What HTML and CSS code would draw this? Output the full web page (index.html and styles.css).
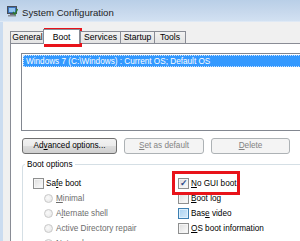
FILE: index.html
```html
<!DOCTYPE html>
<html lang="en">
<head>
    <meta charset="UTF-8">
    <title>System Configuration</title>
    <link rel="stylesheet" href="styles.css">
</head>
<body>
    <div class="window">
        <div class="titlebar">
            <svg class="app-icon" width="11" height="11" viewBox="0 0 11 11">
                <rect x="0.5" y="0.5" width="9" height="7" fill="#3b6fb6" stroke="#4a4f58"/>
                <rect x="2" y="2" width="6" height="4" fill="#8fc3f0"/>
                <rect x="3" y="8" width="4" height="1" fill="#6a6f78"/>
                <rect x="1" y="9" width="8" height="1.5" fill="#8a8f98"/>
                <path d="M6 6 L8 8.5 L10.5 3" fill="none" stroke="#2d7a2d" stroke-width="1.4"/>
            </svg>
            <span class="title">System Configuration</span>
        </div>
        <div class="client">
            <div class="tabs">
                <div class="tab tab-general">General</div>
                <div class="tab tab-boot active">Boot</div>
                <div class="tab tab-services">Services</div>
                <div class="tab tab-startup">Startup</div>
                <div class="tab tab-tools">Tools</div>
            </div>
            <div class="panel">
                <div class="os-list">
                    <div class="os-item selected">Windows 7 (C:\Windows) : Current OS; Default OS</div>
                </div>
                <div class="buttons">
                    <div class="btn btn-advanced">Ad<u>v</u>anced options...</div>
                    <div class="btn btn-default disabled"><u>S</u>et as default</div>
                    <div class="btn btn-delete disabled"><u>D</u>elete</div>
                </div>
                <fieldset class="boot-options">
                    <legend>Boot options</legend>
                    <div class="cols">
                        <div class="col col-left">
                            <div class="opt"><span class="check"></span><span>Sa<u>f</u>e boot</span></div>
                            <div class="opt sub disabled"><span class="radio"></span><span><u>M</u>inimal</span></div>
                            <div class="opt sub disabled"><span class="radio"></span><span>A<u>l</u>ternate shell</span></div>
                            <div class="opt sub disabled"><span class="radio"></span><span>Active Directory repair</span></div>
                            <div class="opt sub disabled"><span class="radio"></span><span>Net<u>w</u>ork</span></div>
                        </div>
                        <div class="col col-right">
                            <div class="opt"><span class="check checked">&#10003;</span><span><u>N</u>o GUI boot</span></div>
                            <div class="opt"><span class="check"></span><span><u>B</u>oot log</span></div>
                            <div class="opt"><span class="check hover"></span><span>Bas<u>e</u> video</span></div>
                            <div class="opt"><span class="check"></span><span><u>O</u>S boot information</span></div>
                        </div>
                    </div>
                </fieldset>
            </div>
        </div>
        <div class="mark mark-tab"></div>
        <div class="mark mark-nogui"></div>
    </div>
</body>
</html>
```

FILE: styles.css
```css
body {
    margin: 0;
    padding: 0;
    font-family: "Liberation Sans", Arial, sans-serif;
    font-size: 8.2px;
    color: #000;
}

.window {
    position: relative;
    width: 300px;
    height: 241px;
    overflow: hidden;
    background: #f0f0f0;
}

.titlebar {
    height: 22px;
    display: flex;
    align-items: center;
    padding-left: 7px;
    background: linear-gradient(#b9cfe7, #c8d9ed 60%, #d2e1f2);
    border-bottom: 1px solid #dfe9f5;
    box-sizing: border-box;
}

.app-icon {
    margin-top: 2px;
}

.title {
    margin-left: 4px;
    margin-top: 3px;
    font-size: 9.6px;
    color: #1e1e1e;
}

.client {
    border-left: 3px solid #cbdcf0;
    padding-left: 7px;
    padding-top: 7px;
}

.tabs {
    display: flex;
    align-items: flex-end;
    height: 14px;
    position: relative;
    z-index: 1;
}

.tab {
    height: 11px;
    line-height: 11px;
    border: 1px solid #898c95;
    border-bottom: none;
    margin-right: -1px;
    text-align: center;
    background: linear-gradient(#f2f2f2, #e3e3e3);
    font-size: 8.6px;
    box-sizing: content-box;
}

.tab-general { width: 33px; }
.tab-boot { width: 35px; }
.tab-services { width: 39px; }
.tab-startup { width: 33px; }
.tab-tools { width: 30px; }

.tab.active {
    height: 14px;
    line-height: 14px;
    margin: 0 0 -1px -1px;
    background: #fff;
    position: relative;
}

.panel {
    border: 1px solid #898c95;
    background: #fff;
    width: 300px;
    height: 200px;
    padding: 9px 0 0 10px;
    box-sizing: border-box;
}

.os-list {
    width: 290px;
    height: 78px;
    border: 1px solid #828790;
    box-sizing: border-box;
    padding: 1px;
}

.os-item {
    height: 12px;
    line-height: 11px;
    padding-left: 2px;
}

.os-item.selected {
    background: #3399ff;
    color: #fff;
    border: 1px dotted #c8e2ff;
    box-sizing: border-box;
}

.buttons {
    display: flex;
    gap: 7px;
    margin: 7px 0 0 1px;
}

.btn {
    height: 16px;
    line-height: 14px;
    box-sizing: border-box;
    border: 1px solid #707070;
    border-radius: 3px;
    text-align: center;
    background: linear-gradient(#f2f2f2, #ebebeb 50%, #dddddd 50%, #cfcfcf);
}

.btn-advanced { width: 95px; }
.btn-default { width: 80px; }
.btn-delete { width: 79px; }

.btn.disabled {
    border-color: #adb2b5;
    background: #f4f4f4;
    color: #838383;
}

.boot-options {
    margin: 6px 0 0 1px;
    padding: 7px 0 0 10px;
    border: 1px solid #d5dfe5;
    border-radius: 3px;
    width: 290px;
    height: 100px;
    box-sizing: border-box;
}

.boot-options legend {
    padding: 0 2px;
    margin-left: -8px;
}

.cols {
    display: flex;
}

.col-left {
    width: 145px;
}

.opt {
    display: flex;
    align-items: center;
    height: 15px;
}

.opt.sub {
    padding-left: 11px;
}

.opt.disabled {
    color: #6d6d6d;
}

.check {
    width: 11px;
    height: 11px;
    box-sizing: border-box;
    border: 1px solid #8e8f8f;
    background: linear-gradient(135deg, #dcdcdc, #fdfdfd);
    box-shadow: inset 0 0 0 1px #f4f4f4;
    margin-right: 2px;
    font-size: 9px;
    line-height: 9px;
    text-align: center;
    color: #2c4b8a;
    font-weight: bold;
}

.check.hover {
    border-color: #3c7fb1;
    background: linear-gradient(135deg, #a9d1f1, #d6ebfa);
    box-shadow: inset 0 0 0 1px #def0fd;
}

.radio {
    width: 9px;
    height: 9px;
    box-sizing: border-box;
    border-radius: 50%;
    border: 1px solid #c9c9c9;
    background: radial-gradient(circle at 40% 40%, #fafafa, #e4e4e4);
    margin-right: 3px;
}

.mark {
    position: absolute;
    border: 3px solid #e8131a;
    box-sizing: border-box;
}

.mark-tab {
    left: 44px;
    top: 28px;
    width: 38px;
    height: 19px;
}

.mark-nogui {
    left: 172px;
    top: 171px;
    width: 68px;
    height: 24px;
}
```
